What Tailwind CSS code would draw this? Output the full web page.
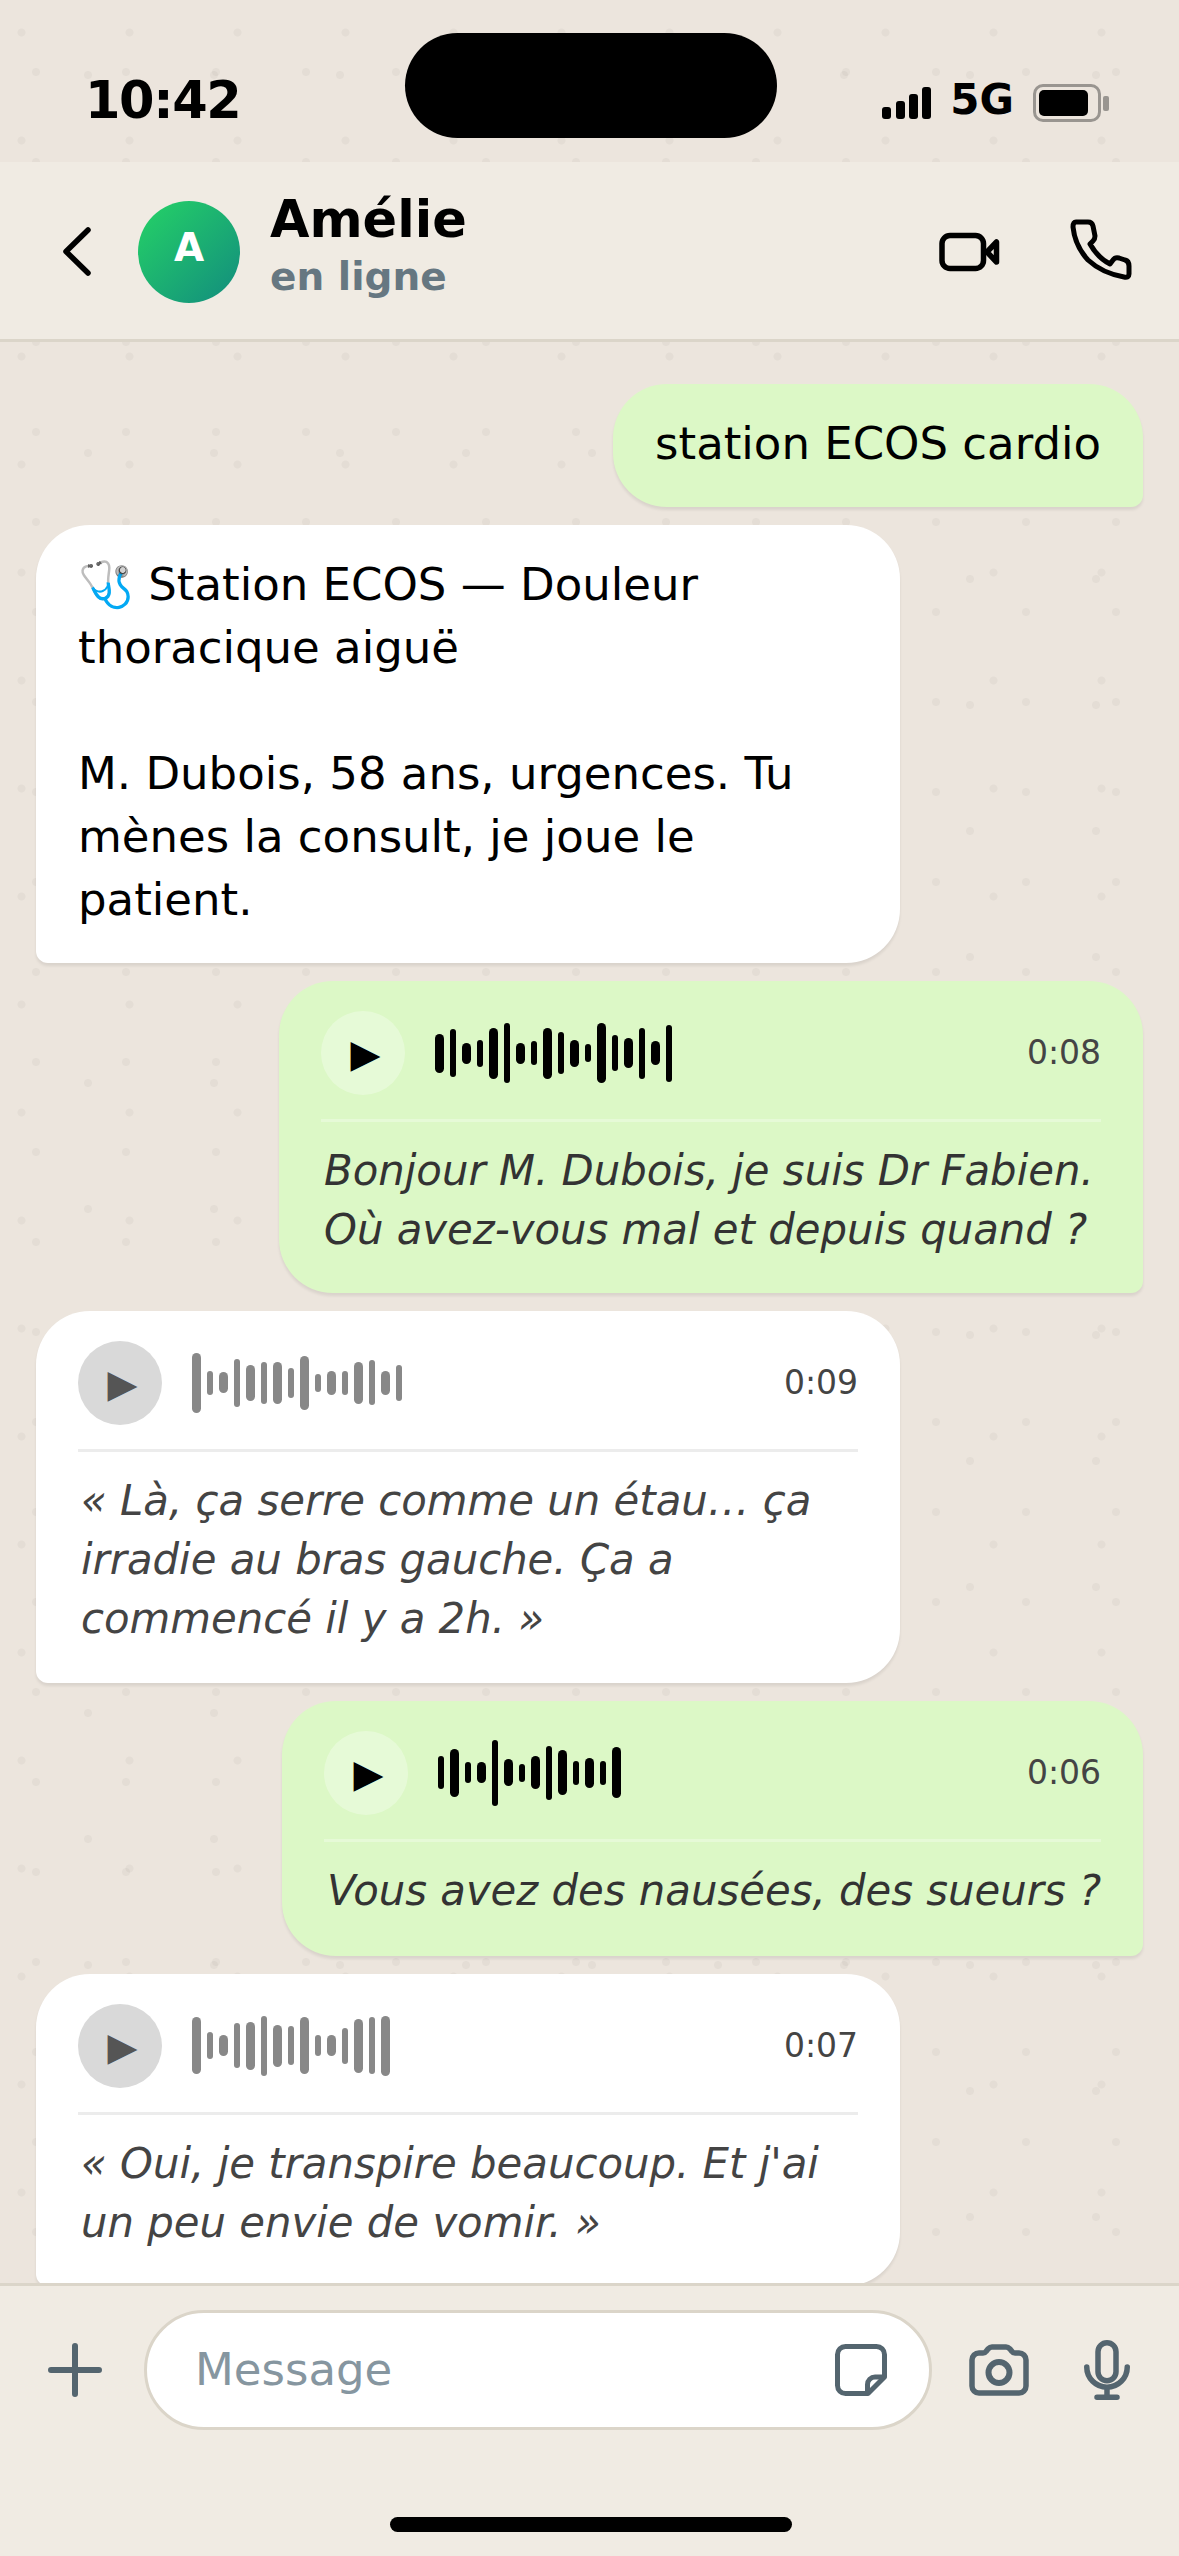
<!doctype html>
<html lang="fr">
<head>
<meta charset="utf-8">
<title>Amélie</title>
<script src="https://cdn.jsdelivr.net/npm/@tailwindcss/browser@4"></script>
</head>
<body class="m-0">
<div class="relative flex flex-col w-[1179px] h-[2556px] overflow-hidden bg-[#ece5dd] font-['DejaVu_Sans',sans-serif] text-black [background-image:radial-gradient(circle_at_21.5px_32.5px,rgba(0,0,0,0.035)_3.5px,transparent_4.5px),radial-gradient(circle_at_36px_72px,rgba(0,0,0,0.035)_3.5px,transparent_4.5px),radial-gradient(circle_at_88px_75px,rgba(0,0,0,0.035)_3.5px,transparent_4.5px)] [background-size:108px_108px,90px_90px,126px_126px]">

  <!-- status bar -->
  <div class="relative shrink-0 h-[162px] flex items-start justify-between pl-[85px] pr-[70px]">
    <div class="mt-[71px] text-[51px] leading-[60px] font-bold tracking-[-1.400px]">10:42</div>
    <div class="absolute left-[405px] top-[33px] w-[372px] h-[105px] rounded-full bg-black"></div>
    <div class="mt-[72px] flex items-end">
      <div class="flex items-end gap-[4.300px] h-[47px]">
        <span class="w-[9px] h-[12px] rounded-[3px] bg-black"></span>
        <span class="w-[9px] h-[18px] rounded-[3px] bg-black"></span>
        <span class="w-[9px] h-[25px] rounded-[3px] bg-black"></span>
        <span class="w-[9px] h-[32px] rounded-[3px] bg-black"></span>
      </div>
      <div class="ml-[19px] mb-[-6px] text-[42px] leading-[50px] font-bold">5G</div>
      <div class="ml-[19px] mb-[-3px] flex items-center">
        <div class="w-[68px] h-[38px] rounded-[10px] border-[3px] border-[#999590] p-[3px]">
          <div class="w-[49px] h-[26px] rounded-[5px] bg-black"></div>
        </div>
        <div class="ml-[2px] w-[6px] h-[15px] rounded-[2px] bg-[#999590]"></div>
      </div>
    </div>
  </div>

  <!-- header -->
  <div class="shrink-0 h-[180px] flex items-center pt-[2px] pl-[63px] pr-[43px] bg-[#f0ebe3] border-b-[3px] border-[#dbd5c9]">
    <svg class="w-[28px] h-[49px]" viewBox="0 0 28 49" fill="none" stroke="#000" stroke-width="5.500" stroke-linecap="round" stroke-linejoin="round"><path d="M25 3 3 24.500 25 46"/></svg>
    <div class="ml-[47px] w-[102px] h-[102px] pb-[7px] rounded-full bg-[linear-gradient(135deg,#25d366,#128c7e)] flex items-center justify-center text-white text-[39px] font-bold">A</div>
    <div class="ml-[30px] flex flex-col">
      <div class="text-[51px] leading-[51px] font-bold">Amélie</div>
      <div class="text-[39px] leading-[64px] font-bold text-[#667781]">en ligne</div>
    </div>
    <div class="ml-auto flex items-center">
      <svg class="w-[66px] h-[44px]" viewBox="6 20 66 44" fill="none" stroke="#000" stroke-width="5.500" stroke-linejoin="round"><rect x="12" y="25.500" width="41.500" height="33" rx="8"/><path d="M57 42 66.500 32V52Z"/></svg>
      <svg class="ml-[68px] mt-[-7px] w-[66px] h-[66px]" viewBox="140 5 66 66" fill="none" stroke="#000" stroke-width="5" stroke-linejoin="round"><path d="M146 12H158Q162 12 163 16L165 26Q165 29 163 31L160 34Q168 48 180 54L183 50Q185 47 189 48L195 50Q199 51 199 56V64Q199 68 194 67Q172 63 158 50Q145 36 143 17Q143 12 146 12Z"/></svg>
    </div>
  </div>

  <!-- chat -->
  <div class="flex-1 min-h-0 overflow-hidden flex flex-col gap-[18px] pt-[42px] px-[36px]">

    <div class="self-end shrink-0 max-w-[864px] rounded-t-[54px] rounded-bl-[54px] rounded-br-[12px] bg-[#dcf8c6] px-[42px] pt-[27.500px] pb-[32.500px] text-[45px] leading-[63px] shadow-[0_3px_3px_rgba(0,0,0,0.08)]">station ECOS cardio</div>

    <div class="self-start shrink-0 w-[864px] rounded-t-[54px] rounded-br-[54px] rounded-bl-[12px] bg-white px-[42px] pt-[27.500px] pb-[32.500px] text-[45px] leading-[63px] shadow-[0_3px_3px_rgba(0,0,0,0.08)]">🩺 Station ECOS — Douleur thoracique aiguë<br><br>M. Dubois, 58 ans, urgences. Tu mènes la consult, je joue le patient.</div>

    <!-- voice sent 1 -->
    <div class="self-end shrink-0 w-[864px] rounded-t-[54px] rounded-bl-[54px] rounded-br-[12px] bg-[#dcf8c6] px-[42px] pt-[30px] pb-[33.400px] shadow-[0_3px_3px_rgba(0,0,0,0.08)]">
      <div class="flex items-center">
        <div class="shrink-0 w-[84px] h-[84px] rounded-full bg-white/30 flex items-center justify-center pl-[5px] pt-[1px] text-[39px] leading-none text-black">▶</div>
        <div class="ml-[30px] flex items-center gap-[6px]">
          <span class="w-[9px] h-[39px] rounded-full bg-black"></span><span class="w-[6px] h-[48px] rounded-full bg-black"></span><span class="w-[9px] h-[21px] rounded-full bg-black"></span><span class="w-[6px] h-[27px] rounded-full bg-black"></span><span class="w-[9px] h-[51px] rounded-full bg-black"></span><span class="w-[6px] h-[60px] rounded-full bg-black"></span><span class="w-[9px] h-[21px] rounded-full bg-black"></span><span class="w-[6px] h-[24px] rounded-full bg-black"></span><span class="w-[9px] h-[51px] rounded-full bg-black"></span><span class="w-[6px] h-[42px] rounded-full bg-black"></span><span class="w-[9px] h-[27px] rounded-full bg-black"></span><span class="w-[6px] h-[18px] rounded-full bg-black"></span><span class="w-[9px] h-[60px] rounded-full bg-black"></span><span class="w-[6px] h-[36px] rounded-full bg-black"></span><span class="w-[9px] h-[30px] rounded-full bg-black"></span><span class="w-[6px] h-[51px] rounded-full bg-black"></span><span class="w-[9px] h-[24px] rounded-full bg-black"></span><span class="w-[6px] h-[57px] rounded-full bg-black"></span>
        </div>
        <div class="ml-auto text-[33px] leading-[42px] text-[#444]">0:08</div>
      </div>
      <div class="mt-[24px] border-t-[3px] border-white/30 pt-[20px] pl-[3px] text-[41.800px] leading-[58.800px] italic text-[#333]">Bonjour M. Dubois, je suis Dr Fabien. Où avez-vous mal et depuis quand ?</div>
    </div>

    <!-- voice received 1 -->
    <div class="self-start shrink-0 w-[864px] rounded-t-[54px] rounded-br-[54px] rounded-bl-[12px] bg-white px-[42px] pt-[30px] pb-[34.600px] shadow-[0_3px_3px_rgba(0,0,0,0.08)]">
      <div class="flex items-center">
        <div class="shrink-0 w-[84px] h-[84px] rounded-full bg-[#d9d9d9] flex items-center justify-center pl-[5px] pt-[1px] text-[39px] leading-none text-[#555]">▶</div>
        <div class="ml-[30px] flex items-center gap-[6px]">
          <span class="w-[9px] h-[60px] rounded-full bg-[#888]"></span><span class="w-[6px] h-[24px] rounded-full bg-[#888]"></span><span class="w-[9px] h-[21px] rounded-full bg-[#888]"></span><span class="w-[6px] h-[48px] rounded-full bg-[#888]"></span><span class="w-[9px] h-[36px] rounded-full bg-[#888]"></span><span class="w-[6px] h-[42px] rounded-full bg-[#888]"></span><span class="w-[9px] h-[42px] rounded-full bg-[#888]"></span><span class="w-[6px] h-[30px] rounded-full bg-[#888]"></span><span class="w-[9px] h-[54px] rounded-full bg-[#888]"></span><span class="w-[6px] h-[18px] rounded-full bg-[#888]"></span><span class="w-[9px] h-[24px] rounded-full bg-[#888]"></span><span class="w-[6px] h-[24px] rounded-full bg-[#888]"></span><span class="w-[9px] h-[42px] rounded-full bg-[#888]"></span><span class="w-[6px] h-[45px] rounded-full bg-[#888]"></span><span class="w-[9px] h-[24px] rounded-full bg-[#888]"></span><span class="w-[6px] h-[36px] rounded-full bg-[#888]"></span>
        </div>
        <div class="ml-auto text-[33px] leading-[42px] text-[#444]">0:09</div>
      </div>
      <div class="mt-[24px] border-t-[3px] border-[#ececec] pt-[20px] pl-[3px] text-[41.800px] leading-[58.800px] italic text-[#444]">« Là, ça serre comme un étau… ça irradie au bras gauche. Ça a commencé il y a 2h. »</div>
    </div>

    <!-- voice sent 2 -->
    <div class="self-end shrink-0 w-[861px] rounded-t-[54px] rounded-bl-[54px] rounded-br-[12px] bg-[#dcf8c6] px-[42px] pt-[30px] pb-[35.200px] shadow-[0_3px_3px_rgba(0,0,0,0.08)]">
      <div class="flex items-center">
        <div class="shrink-0 w-[84px] h-[84px] rounded-full bg-white/30 flex items-center justify-center pl-[5px] pt-[1px] text-[39px] leading-none text-black">▶</div>
        <div class="ml-[30px] flex items-center gap-[6px]">
          <span class="w-[6px] h-[33px] rounded-full bg-black"></span><span class="w-[9px] h-[48px] rounded-full bg-black"></span><span class="w-[6px] h-[21px] rounded-full bg-black"></span><span class="w-[9px] h-[21px] rounded-full bg-black"></span><span class="w-[6px] h-[66px] rounded-full bg-black"></span><span class="w-[9px] h-[27px] rounded-full bg-black"></span><span class="w-[6px] h-[18px] rounded-full bg-black"></span><span class="w-[9px] h-[33px] rounded-full bg-black"></span><span class="w-[6px] h-[54px] rounded-full bg-black"></span><span class="w-[9px] h-[45px] rounded-full bg-black"></span><span class="w-[6px] h-[24px] rounded-full bg-black"></span><span class="w-[9px] h-[30px] rounded-full bg-black"></span><span class="w-[6px] h-[24px] rounded-full bg-black"></span><span class="w-[9px] h-[51px] rounded-full bg-black"></span>
        </div>
        <div class="ml-auto text-[33px] leading-[42px] text-[#444]">0:06</div>
      </div>
      <div class="mt-[24px] border-t-[3px] border-white/30 pt-[20px] pl-[3px] text-[41.800px] leading-[58.800px] italic text-[#333] whitespace-nowrap">Vous avez des nausées, des sueurs ?</div>
    </div>

    <!-- voice received 2 -->
    <div class="self-start shrink-0 w-[864px] rounded-t-[54px] rounded-br-[54px] rounded-bl-[12px] bg-white px-[42px] pt-[30px] pb-[33.400px] shadow-[0_3px_3px_rgba(0,0,0,0.08)]">
      <div class="flex items-center">
        <div class="shrink-0 w-[84px] h-[84px] rounded-full bg-[#d9d9d9] flex items-center justify-center pl-[5px] pt-[1px] text-[39px] leading-none text-[#555]">▶</div>
        <div class="ml-[30px] flex items-center gap-[6px]">
          <span class="w-[9px] h-[57px] rounded-full bg-[#888]"></span><span class="w-[6px] h-[27px] rounded-full bg-[#888]"></span><span class="w-[9px] h-[21px] rounded-full bg-[#888]"></span><span class="w-[6px] h-[45px] rounded-full bg-[#888]"></span><span class="w-[9px] h-[48px] rounded-full bg-[#888]"></span><span class="w-[6px] h-[60px] rounded-full bg-[#888]"></span><span class="w-[9px] h-[42px] rounded-full bg-[#888]"></span><span class="w-[6px] h-[39px] rounded-full bg-[#888]"></span><span class="w-[9px] h-[57px] rounded-full bg-[#888]"></span><span class="w-[6px] h-[21px] rounded-full bg-[#888]"></span><span class="w-[9px] h-[21px] rounded-full bg-[#888]"></span><span class="w-[6px] h-[36px] rounded-full bg-[#888]"></span><span class="w-[9px] h-[54px] rounded-full bg-[#888]"></span><span class="w-[6px] h-[57px] rounded-full bg-[#888]"></span><span class="w-[9px] h-[60px] rounded-full bg-[#888]"></span>
        </div>
        <div class="ml-auto text-[33px] leading-[42px] text-[#444]">0:07</div>
      </div>
      <div class="mt-[24px] border-t-[3px] border-[#ececec] pt-[20px] pl-[3px] text-[41.800px] leading-[58.800px] italic text-[#444]">« Oui, je transpire beaucoup. Et j'ai un peu envie de vomir. »</div>
    </div>
  </div>

  <!-- input bar -->
  <div class="shrink-0 h-[273px] bg-[#f0ebe3] border-t-[3px] border-[#dbd5c9] relative">
    <div class="flex items-center pt-[24px] pl-[48px]">
      <svg class="w-[54px] h-[54px]" viewBox="0 0 54 54" fill="none" stroke="#54656f" stroke-width="6" stroke-linecap="round"><path d="M27 3V51M3 27H51"/></svg>
      <div class="ml-[42px] w-[788px] h-[120px] rounded-full bg-white border-[3px] border-[#dbd5c9] flex items-center pl-[48px] pr-[42px]">
        <span class="text-[45px] text-[#8696a0]">Message</span>
        <svg class="ml-auto w-[52px] h-[52px]" viewBox="0 0 52 52" fill="none" stroke="#54656f" stroke-width="5" stroke-linejoin="round"><path d="M10.500 2.500H41.500A8 8 0 0 1 49.500 10.500V33L33 49.500H10.500A8 8 0 0 1 2.500 41.500V10.500A8 8 0 0 1 10.500 2.500Z"/><path d="M49.500 33H40A7.500 7.500 0 0 0 32.500 40.500V49.500"/></svg>
      </div>
      <svg class="ml-[37px] w-[60px] h-[52px]" viewBox="0 0 60 52" fill="none" stroke="#54656f" stroke-width="5.500" stroke-linejoin="round"><path d="M10 9H14Q16 9 17 7.500L19 5Q21 3 23 3H37Q39 3 41 5L43 7.500Q44 9 46 9H50A7 7 0 0 1 57 16V42A7 7 0 0 1 50 49H10A7 7 0 0 1 3 42V16A7 7 0 0 1 10 9Z"/><circle cx="30" cy="28.500" r="10.500" stroke-width="6"/></svg>
      <svg class="ml-[55px] w-[46px] h-[60px]" viewBox="0 0 46 60" fill="none" stroke="#54656f" stroke-width="5.500" stroke-linecap="round"><rect x="14" y="2.750" width="18" height="38" rx="9"/><path d="M2.750 27A20.250 20.250 0 0 0 43.250 27M23 48V57M13 57.250H33"/></svg>
    </div>
    <div class="absolute left-[390px] top-[231px] w-[402px] h-[15px] rounded-full bg-black"></div>
  </div>
</div>
</body>
</html>
